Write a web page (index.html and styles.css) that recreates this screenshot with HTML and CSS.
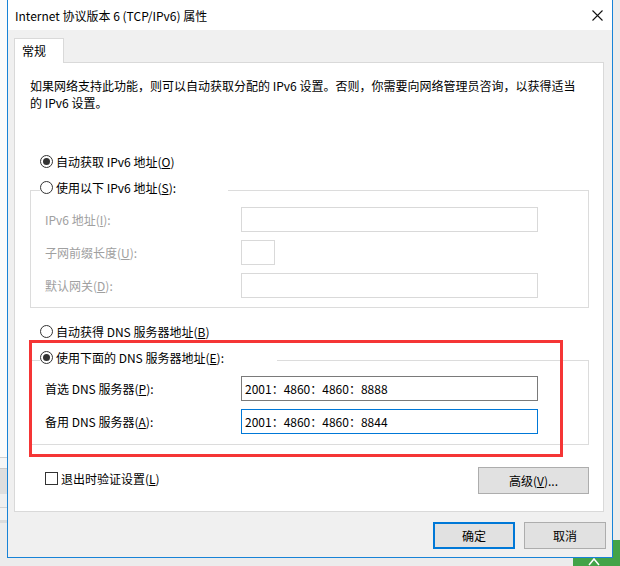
FILE: index.html
```html
<!DOCTYPE html>
<html lang="zh-CN">
<head>
    <meta charset="UTF-8">
    <meta name="viewport" content="width=device-width, initial-scale=1.0">
    <title>Internet 协议版本 6 (TCP/IPv6) 属性</title>
    <link rel="stylesheet" href="styles.css">
</head>
<body>
    <div class="desk-left"></div>
    <div class="tray">
        <svg width="16" height="10" viewBox="0 0 16 10"><path d="M3 9 L8 3 L13 9" fill="none" stroke="#fff" stroke-width="1.5"/></svg>
    </div>

    <div class="window">
        <div class="titlebar">
            <span class="title">Internet 协议版本 6 (TCP/IPv6) 属性</span>
            <span class="close">
                <svg width="11" height="11" viewBox="0 0 11 11"><path d="M0.5 0.5 L10.5 10.5 M10.5 0.5 L0.5 10.5" stroke="#111" stroke-width="1.1"/></svg>
            </span>
        </div>

        <div class="tabs">
            <div class="tab">常规</div>
        </div>

        <div class="panel">
            <p class="desc">如果网络支持此功能，则可以自动获取分配的 IPv6 设置。否则，你需要向网络管理员咨询，以获得适当<br>的 IPv6 设置。</p>

            <div class="radio-row auto-ip"><span class="radio checked"></span>自动获取 IPv6 地址(<u>O</u>)</div>

            <div class="group group-ip">
                <div class="group-title"><span class="radio"></span>使用以下 IPv6 地址(<u>S</u>):</div>
                <div class="field disabled first">
                    <span class="field-label">IPv6 地址(<u>I</u>):</span>
                    <span class="input"></span>
                </div>
                <div class="field disabled">
                    <span class="field-label">子网前缀长度(<u>U</u>):</span>
                    <span class="input short"></span>
                </div>
                <div class="field disabled">
                    <span class="field-label">默认网关(<u>D</u>):</span>
                    <span class="input"></span>
                </div>
            </div>

            <div class="radio-row auto-dns"><span class="radio"></span>自动获得 DNS 服务器地址(<u>B</u>)</div>

            <div class="group group-dns">
                <div class="group-title"><span class="radio checked"></span>使用下面的 DNS 服务器地址(<u>E</u>):</div>
                <div class="field first">
                    <span class="field-label">首选 DNS 服务器(<u>P</u>):</span>
                    <span class="input dark">2001：4860：4860：8888</span>
                </div>
                <div class="field">
                    <span class="field-label">备用 DNS 服务器(<u>A</u>):</span>
                    <span class="input focus">2001：4860：4860：8844</span>
                </div>
            </div>

            <div class="panel-foot">
                <div class="check-row"><span class="checkbox"></span>退出时验证设置(<u>L</u>)</div>
                <button class="btn btn-adv">高级(<u>V</u>)...</button>
            </div>

            <div class="highlight"></div>
        </div>

        <div class="dialog-buttons">
            <button class="btn btn-default">确定</button>
            <button class="btn">取消</button>
        </div>
    </div>
</body>
</html>
```

FILE: styles.css
```css
body {
    margin: 0;
    width: 620px;
    height: 566px;
    overflow: hidden;
    position: relative;
    background: #ececec;
    font-family: "Noto Sans CJK SC", "Noto Sans", sans-serif;
    font-size: 12px;
    line-height: 17px;
    color: #000;
}

/* bits of the desktop behind the dialog */
.desk-left {
    position: absolute;
    left: 0;
    top: 0;
    width: 8px;
    height: 566px;
    background: linear-gradient(to bottom,
        #fbfbfb 0, #fbfbfb 457px,
        #cfcfcf 457px, #cfcfcf 458px,
        #f6f6f6 458px, #f6f6f6 468px,
        #c9c9c9 468px, #c9c9c9 469px,
        #dedede 469px, #dedede 494px,
        #efefef 494px, #efefef 507px,
        #d2d2d2 507px, #d2d2d2 508px,
        #f2f2f2 508px, #f2f2f2 520px,
        #dcdcdc 520px, #dcdcdc 523px,
        #ececec 523px);
}

.tray {
    position: absolute;
    left: 573px;
    top: 540px;
    width: 47px;
    height: 26px;
    background: #43a348;
}

.tray svg {
    position: absolute;
    left: 13px;
    top: 16px;
}

.window {
    position: absolute;
    left: 7px;
    top: 0;
    width: 606px;
    height: 558px;
    box-sizing: border-box;
    border: 1px solid #1883d7;
    border-top: none;
    background: #f0f0f0;
}

.titlebar {
    height: 30px;
    background: #fff;
    display: flex;
    align-items: center;
    padding-left: 7px;
}

.close {
    margin-left: auto;
    width: 30px;
    display: flex;
    justify-content: center;
    align-items: center;
    height: 30px;
}

.tabs {
    display: flex;
    padding-left: 6px;
    margin-top: 8px;
}

.tab {
    position: relative;
    z-index: 1;
    width: 50px;
    height: 25px;
    box-sizing: border-box;
    margin-bottom: -1px;
    padding: 3px 0 0 7px;
    background: #fff;
    border: 1px solid #d9d9d9;
    border-bottom: none;
}

.panel {
    position: relative;
    margin: 0 8px 0 6px;
    height: 450px;
    box-sizing: border-box;
    background: #fff;
    border: 1px solid #d9d9d9;
    padding: 14px 0 0 15px;
}

.desc {
    margin: 0;
    white-space: nowrap;
}

.radio-row {
    display: flex;
    align-items: center;
    padding-left: 10px;
    height: 17px;
}

.auto-ip { margin-top: 42px; }
.auto-dns { margin-top: 15px; }

.radio {
    width: 13px;
    height: 13px;
    box-sizing: border-box;
    border: 1px solid #333;
    border-radius: 50%;
    background: #fff;
    margin-right: 3px;
    position: relative;
    flex: none;
}

.radio.checked::after {
    content: "";
    position: absolute;
    left: 2px;
    top: 2px;
    width: 7px;
    height: 7px;
    border-radius: 50%;
    background: #333;
}

.group {
    width: 559px;
    box-sizing: border-box;
    border: 1px solid #dcdcdc;
}

.group-ip {
    margin-top: 20px;
    padding-bottom: 9px;
}

.group-dns {
    margin-top: 20px;
    padding-bottom: 10px;
}

.group-title {
    display: flex;
    align-items: center;
    height: 17px;
    margin: -12px 0 0 9px;
    background: #fff;
}

.group-ip .group-title { width: 188px; }
.group-dns .group-title { width: 237px; }

.field {
    display: flex;
    align-items: center;
    height: 25px;
    margin-top: 8px;
}

.group-ip .field.first { margin-top: 11px; }
.group-dns .field.first { margin-top: 10px; }

.field-label {
    width: 196px;
    padding-left: 14px;
    flex: none;
}

.input {
    width: 297px;
    height: 25px;
    box-sizing: border-box;
    border: 1px solid #d9d9d9;
    background: #fff;
    padding-left: 3px;
    display: flex;
    align-items: center;
}

.input.short { width: 34px; }
.input.dark { border-color: #7a7a7a; }
.input.focus { border-color: #0078d7; }

.disabled .field-label { color: #a0a0a0; }

.panel-foot {
    width: 559px;
    display: flex;
    justify-content: space-between;
    align-items: flex-start;
    margin-top: 22px;
}

.check-row {
    display: flex;
    align-items: center;
    height: 17px;
    margin-top: 3px;
    padding-left: 15px;
}

.checkbox {
    width: 13px;
    height: 13px;
    box-sizing: border-box;
    border: 1px solid #333;
    background: #fff;
    margin-right: 3px;
}

.btn {
    font-family: inherit;
    font-size: 12px;
    color: #000;
    height: 27px;
    width: 82px;
    padding: 0;
    background: #e1e1e1;
    border: 1px solid #adadad;
}

.btn-adv { width: 111px; }

.btn-default {
    border-color: #0078d7;
    box-shadow: inset 0 0 0 1px #0078d7;
}

.dialog-buttons {
    display: flex;
    justify-content: flex-end;
    gap: 9px;
    margin-top: 10px;
    padding-right: 6px;
}

/* red annotation box drawn over the dns part */
.highlight {
    position: absolute;
    left: 14px;
    top: 277px;
    width: 534px;
    height: 117px;
    box-sizing: border-box;
    border: 3px solid #f53535;
}
```
